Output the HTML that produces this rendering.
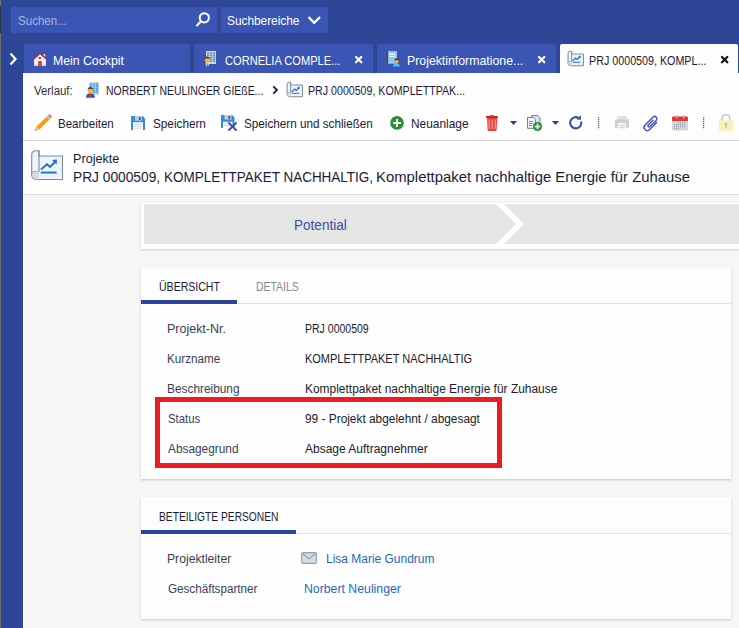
<!DOCTYPE html>
<html><head><meta charset="utf-8">
<style>
html,body{margin:0;padding:0;}
body{width:739px;height:628px;overflow:hidden;position:relative;background:#2d4796;font-family:"Liberation Sans",sans-serif;}
.a{position:absolute;}
.t{position:absolute;white-space:nowrap;transform-origin:0 0;font-family:"Liberation Sans",sans-serif;}
svg{position:absolute;overflow:visible;}
</style></head><body>
<!-- left strip -->
<div class="a" style="left:0;top:0;width:1px;height:628px;background:#6f6f6f"></div>
<div class="a" style="left:0;top:6px;width:1px;height:27px;background:#27354f"></div>
<!-- search box -->
<div class="a" style="left:11px;top:7px;width:206px;height:26px;background:#3a55b4"></div>
<svg style="left:0;top:0" width="739" height="40">
  <circle cx="204.3" cy="17.8" r="4.6" fill="none" stroke="#fff" stroke-width="2"/>
  <line x1="201" y1="21.2" x2="197" y2="25.4" stroke="#fff" stroke-width="2.2" stroke-linecap="round"/>
</svg>
<div class="a" style="left:221px;top:7px;width:107px;height:26px;background:#3a55b4"></div>
<svg style="left:0;top:0" width="739" height="40">
  <polyline points="308.5,17 314.2,22.8 320,17" fill="none" stroke="#fff" stroke-width="2.3"/>
</svg>
<!-- left chevron -->
<svg style="left:0;top:0" width="30" height="80">
  <polyline points="10.5,53.5 15.5,59 10.5,64.5" fill="none" stroke="#fff" stroke-width="2.2"/>
</svg>
<!-- tabs -->
<div class="a" style="left:24px;top:44px;width:166px;height:29px;border-radius:2px 2px 0 0;background:#3a55b4"></div>
<div class="a" style="left:194px;top:44px;width:179px;height:29px;border-radius:2px 2px 0 0;background:#3a55b4"></div>
<div class="a" style="left:377px;top:44px;width:179px;height:29px;border-radius:2px 2px 0 0;background:#3a55b4"></div>
<div class="a" style="left:560px;top:44px;width:178px;height:29px;border-radius:2px 2px 0 0;background:#fdfdfd"></div>
<!-- white area -->
<div class="a" style="left:23px;top:73px;width:716px;height:555px;background:#fdfdfd"></div>
<div class="a" style="left:24px;top:195px;width:715px;height:433px;background:#f6f6f6"></div>
<div class="a" style="left:23px;top:140px;width:716px;height:1px;background:#d6d6d6"></div>
<div class="a" style="left:23px;top:194px;width:716px;height:1px;background:#dcdcdc"></div>
<!-- pipeline -->
<div class="a" style="left:141px;top:203px;width:600px;height:46px;background:#fff;box-shadow:0 1px 2px rgba(0,0,0,0.18)"></div>
<div class="a" style="left:144px;top:204px;width:600px;height:40px;background:#e5e5e5"></div>
<svg style="left:0;top:0" width="739" height="260">
  <polygon points="496,204 504,204 524,224 504,244 496,244 516,224" fill="#fff"/>
</svg>
<!-- card 1 -->
<div class="a" style="left:141px;top:267px;width:590px;height:212px;background:#fdfdfd;box-shadow:0 1px 2px rgba(0,0,0,0.2)"></div>
<div class="a" style="left:141px;top:303px;width:590px;height:1px;background:#e2e2e2"></div>
<div class="a" style="left:141px;top:300px;width:96px;height:4px;background:#2c4596"></div>
<div class="a" style="left:155px;top:397px;width:337px;height:61px;border:5px solid #ec1c24"></div>
<!-- card 2 -->
<div class="a" style="left:141px;top:497px;width:590px;height:122px;background:#fdfdfd;box-shadow:0 1px 2px rgba(0,0,0,0.2)"></div>
<div class="a" style="left:141px;top:533px;width:590px;height:1px;background:#e2e2e2"></div>
<div class="a" style="left:141px;top:530px;width:155px;height:4px;background:#2c4596"></div>

<svg style="left:0;top:0" width="739" height="628">
 <defs>
  <g id="chart">
   <!-- 32x30 local -->
   <path d="M8,6 H31.5 V29.5 H6 Q0.7,29.5 0.7,24.5 V5 Q0.7,0.7 4.5,0.7 H8 Z" fill="#eef3f9" stroke="#7b8d99" stroke-width="1.1"/>
   <path d="M8,0.7 V21.5 H5 Q0.7,21.5 0.7,25.5" fill="none" stroke="#7b8d99" stroke-width="1.1"/>
   <path d="M0.9,24.5 Q1.5,21.6 5,21.6 H8 V29.2 H5.5 Q1,29 0.9,24.5Z" fill="#d3dbe3"/>
   <polyline points="10,19.5 16,14.3 19,17 24.5,11.5" fill="none" stroke="#1f6fd1" stroke-width="1.9"/>
   <polygon points="21,10 26,9.5 25.5,14.5" fill="#1f6fd1"/>
   <rect x="9.8" y="21.6" width="15.8" height="1.9" fill="#1f6fd1"/>
  </g>
  <g id="chartS">
   <!-- 32x30 local -->
   <path d="M8,6 H31.5 V29.5 H6 Q0.7,29.5 0.7,24.5 V5 Q0.7,0.7 4.5,0.7 H8 Z" fill="#eef3f9" stroke="#7b8d99" stroke-width="2"/>
   <path d="M8,0.7 V21.5 H5 Q0.7,21.5 0.7,25.5" fill="none" stroke="#7b8d99" stroke-width="2"/>
   <path d="M0.9,24.5 Q1.5,21.6 5,21.6 H8 V29.2 H5.5 Q1,29 0.9,24.5Z" fill="#d3dbe3"/>
   <polyline points="10,19.5 16,14.3 19,17 24.5,11.5" fill="none" stroke="#1f6fd1" stroke-width="2.4"/>
   <polygon points="21,10 26,9.5 25.5,14.5" fill="#1f6fd1"/>
   <rect x="9.8" y="21.6" width="15.8" height="1.9" fill="#1f6fd1"/>
  </g>
  <g id="bldg">
   <!-- 14x16 local: building + person -->
   <rect x="3" y="0" width="10" height="13" fill="#d8d5cc"/>
   <g fill="#1e8ff5">
    <rect x="4" y="1.6" width="2.2" height="1.2"/><rect x="7" y="1.6" width="2.2" height="1.2"/><rect x="10" y="1.6" width="2.2" height="1.2"/>
    <rect x="4" y="3.6" width="2.2" height="1.2"/><rect x="7" y="3.6" width="2.2" height="1.2"/><rect x="10" y="3.6" width="2.2" height="1.2"/>
    <rect x="7" y="5.6" width="2.2" height="1.2"/><rect x="10" y="5.6" width="2.2" height="1.2"/>
    <rect x="7" y="7.6" width="2.2" height="1.2"/><rect x="10" y="7.6" width="2.2" height="1.2"/>
    <rect x="7" y="9.6" width="2.2" height="1.2"/><rect x="10" y="9.6" width="2.2" height="1.2"/>
   </g>
  </g>
 </defs>
 <!-- house -->
 <rect x="34" y="58" width="12" height="8" fill="#eceef8"/>
 <rect x="34" y="64.5" width="12" height="1.5" fill="#c9cde8"/>
 <rect x="43.5" y="54" width="1.6" height="3.5" fill="#eceef8"/>
 <polygon points="40,52 33.3,58.6 34.5,59.6 40,54.3 45.5,59.6 46.7,58.6" fill="#c0262c"/>
 <polygon points="40,54.3 34.5,59.6 45.5,59.6" fill="#eceef8"/>
 <rect x="38.9" y="57.2" width="2" height="1.8" fill="#0b4a8c"/>
 <rect x="38.1" y="61" width="3.8" height="5" fill="#e64a0c"/>
 <!-- tab2 icon building+person -->
 <use href="#bldg" x="203" y="51"/>
 <circle cx="207.3" cy="60" r="2.6" fill="#f5b53a"/>
 <path d="M204.6,59.5 Q204.8,56.6 207.3,56.6 Q209.9,56.6 210,59.2 Q208.6,58 207.3,58.4 Q205.6,58 204.6,59.5Z" fill="#3b3b3b"/>
 <path d="M205.5,63.2 L209.2,63.2 L208.2,66.2 L206.4,66.2Z" fill="#e8e8f4"/>
 <rect x="206.8" y="63.5" width="1" height="2.6" fill="#e53935"/>
 <!-- tab3 icon book+person -->
 <rect x="388" y="51" width="9" height="12.8" fill="#92c6f2"/>
 <rect x="386.3" y="51.3" width="1.8" height="12.2" fill="#3d515e"/>
 <rect x="389.3" y="53.3" width="6" height="1.6" fill="#eaf6ff"/>
 <rect x="389.3" y="56" width="6" height="0.9" fill="#eaf6ff"/>
 <path d="M393,66.6 Q393,63.8 396.5,63.8 Q400,63.8 400,66.6Z" fill="#4fc3f7"/>
 <circle cx="396.6" cy="61.3" r="2.2" fill="#f7a534"/>
 <path d="M394.3,61 Q394.3,58.3 396.6,58.3 Q398.9,58.3 398.9,61 Q397.8,59.8 396.6,60 Q395.3,59.8 394.3,61Z" fill="#3b3b3b"/>
 <!-- tab4 chart icon -->
 <use href="#chartS" transform="translate(567.7,51) scale(0.5)"/>
 <!-- breadcrumb icons -->
 <use href="#bldg" x="86" y="82"/>
 <circle cx="90.3" cy="90.5" r="2.6" fill="#f5b53a"/>
 <path d="M87.6,90 Q87.8,87 90.3,87 Q92.9,87 93,89.7 Q91.6,88.5 90.3,88.9 Q88.6,88.5 87.6,90Z" fill="#3b3b3b"/>
 <path d="M86,97.8 Q86,94 88.7,93.6 L92,93.6 Q94.9,94 94.9,97.8Z" fill="#3a4fbf"/>
 <rect x="89.9" y="94" width="1" height="3" fill="#e53935"/>
 <polyline points="273.3,86.3 277,90 273.3,93.7" fill="none" stroke="#1b1b3a" stroke-width="1.8"/>
 <use href="#chartS" transform="translate(286.7,82) scale(0.5)"/>
 <!-- header chart icon -->
 <use href="#chart" x="31" y="150"/>
 <!-- tab close x -->
 <g stroke="#fff" stroke-width="2.2" stroke-linecap="round">
  <line x1="356" y1="57" x2="361.3" y2="62.3"/><line x1="361.3" y1="57" x2="356" y2="62.3"/>
  <line x1="539" y1="57" x2="544.3" y2="62.3"/><line x1="544.3" y1="57" x2="539" y2="62.3"/>
 </g>
 <g stroke="#111" stroke-width="2.2" stroke-linecap="round">
  <line x1="722" y1="57" x2="727.3" y2="62.3"/><line x1="727.3" y1="57" x2="722" y2="62.3"/>
 </g>
 <!-- pencil -->
 <g transform="translate(35.2,130.5) rotate(-44)">
  <polygon points="0,0 3.2,-2 3.2,2" fill="#f7c54a"/>
  <polygon points="0,0 1.3,-0.8 1.3,0.8" fill="#333"/>
  <rect x="3.2" y="-2" width="15" height="4" fill="#ff9a0a"/>
  <rect x="18.2" y="-2" width="1.6" height="4" fill="#b0c4cf"/>
  <path d="M19.8,-2 H20.6 Q22,-2 22,0 Q22,2 20.6,2 H19.8Z" fill="#e57373"/>
 </g>
 <!-- floppy -->
 <path d="M131,116 H142.5 L145,118.5 V130 H131Z" fill="#2f8ede"/>
 <rect x="135" y="116" width="7" height="4.7" fill="#c5ccd2"/>
 <rect x="139" y="117" width="1.6" height="3" fill="#16508a"/>
 <rect x="133" y="122.2" width="10" height="7.8" fill="#ffffff"/>
 <rect x="134.3" y="123.7" width="7.4" height="0.9" fill="#c5ccd2"/>
 <rect x="134.3" y="125.7" width="7.4" height="0.9" fill="#c5ccd2"/>
 <rect x="134.3" y="127.7" width="7.4" height="0.9" fill="#c5ccd2"/>
 <!-- floppy close -->
 <path d="M221,115 H232 L234.5,117.5 V128 H221Z" fill="#2f8ede"/>
 <rect x="224.5" y="115" width="7" height="4.5" fill="#c5ccd2"/>
 <rect x="228.5" y="116" width="1.6" height="2.8" fill="#16508a"/>
 <rect x="223" y="121.8" width="9.5" height="6.2" fill="#ffffff"/>
 <rect x="224.2" y="123.2" width="6" height="0.9" fill="#c5ccd2"/>
 <rect x="224.2" y="125.2" width="6" height="0.9" fill="#c5ccd2"/>
 <g stroke="#3f4fb8" stroke-width="1.9" stroke-linecap="round">
  <line x1="229" y1="123" x2="236" y2="130"/><line x1="236" y1="123" x2="229" y2="130"/>
 </g>
 <!-- plus circle -->
 <circle cx="397" cy="122.9" r="6.8" fill="#2e8b3a"/>
 <rect x="393" y="122" width="8" height="1.9" fill="#fff"/>
 <rect x="396.1" y="119" width="1.9" height="8" fill="#fff"/>
 <!-- trash -->
 <rect x="485.9" y="116" width="12.1" height="2" rx="0.8" fill="#c62828"/>
 <rect x="490" y="115.2" width="3.8" height="1.2" fill="#d32f2f"/>
 <path d="M487,118 H497.2 L496.6,130 Q496.5,131 495.5,131 H488.7 Q487.7,131 487.6,130Z" fill="#e8453c"/>
 <g fill="#f6b3b0"><rect x="488.7" y="119.5" width="0.9" height="9.5"/><rect x="491.7" y="119.5" width="0.9" height="9.5"/><rect x="494.7" y="119.5" width="0.9" height="9.5"/></g>
 <!-- dropdown triangles -->
 <polygon points="509.9,121 517.1,121 513.5,124.9" fill="#2c3e9a"/>
 <polygon points="551.9,121 559.1,121 555.5,124.9" fill="#2c3e9a"/>
 <!-- copy icon -->
 <path d="M531.5,115.6 H538 L540,117.6 V125 H531.5Z" fill="#dfe4ea" stroke="#6f8390" stroke-width="1"/>
 <path d="M527.5,117.5 H533.5 L535.5,119.5 V128.3 H527.5Z" fill="#f2f5f8" stroke="#6f8390" stroke-width="1"/>
 <g fill="#6f8390"><rect x="529" y="121" width="4" height="0.9"/><rect x="529" y="123" width="4" height="0.9"/><rect x="529" y="125" width="3" height="0.9"/></g>
 <circle cx="537.5" cy="126.5" r="4.6" fill="#2e8b3a"/>
 <rect x="534.7" y="125.8" width="5.6" height="1.5" fill="#fff"/>
 <rect x="536.8" y="123.7" width="1.5" height="5.6" fill="#fff"/>
 <!-- refresh -->
 <path d="M581.2,121.5 A5.6,5.6 0 1 1 578.5,117.9" fill="none" stroke="#3949b0" stroke-width="2.1"/>
 <polygon points="580.9,115.3 581,119.8 576.5,119.6" fill="#3949b0"/>
 <!-- dotted seps -->
 <g fill="#3a4aa8">
  <rect x="598" y="117" width="1.3" height="1.3" rx="0.6"/>
  <rect x="598" y="119" width="1.3" height="1.3" rx="0.6"/>
  <rect x="598" y="121" width="1.3" height="1.3" rx="0.6"/>
  <rect x="598" y="123" width="1.3" height="1.3" rx="0.6"/>
  <rect x="598" y="125" width="1.3" height="1.3" rx="0.6"/>
  <rect x="598" y="127" width="1.3" height="1.3" rx="0.6"/>
  <rect x="703" y="117" width="1.3" height="1.3" rx="0.6"/>
  <rect x="703" y="119" width="1.3" height="1.3" rx="0.6"/>
  <rect x="703" y="121" width="1.3" height="1.3" rx="0.6"/>
  <rect x="703" y="123" width="1.3" height="1.3" rx="0.6"/>
  <rect x="703" y="125" width="1.3" height="1.3" rx="0.6"/>
  <rect x="703" y="127" width="1.3" height="1.3" rx="0.6"/>
 </g>
<!-- printer -->
 <rect x="617.2" y="116" width="9.6" height="3.5" fill="#dedede"/>
 <rect x="615" y="119.3" width="14" height="8.5" rx="1" fill="#cfcfcf"/>
 <rect x="618" y="123" width="8" height="6.8" fill="#f3f3f3"/>
 <rect x="619.2" y="125" width="5.6" height="0.8" fill="#cfcfcf"/><rect x="619.2" y="127" width="5.6" height="0.8" fill="#cfcfcf"/>
 <!-- paperclip -->
 <g transform="translate(651.1,122.8) rotate(-45)">
  <path d="M-3.5,1.9 H5.3 A2.3,2.3 0 0 0 5.3,-2.7 H-5.8 A3.2,3.2 0 0 0 -5.8,3.7 H4.5" fill="none" stroke="#3f51b5" stroke-width="1.4"/>
  <path d="M-3.5,1.9 A1.2,1.2 0 0 1 -3.5,-0.5 H3.6" fill="none" stroke="#3f51b5" stroke-width="1.4"/>
 </g>
<!-- calendar -->
 <rect x="672" y="116.5" width="16" height="14" rx="1.2" fill="#cfd6dc"/>
 <path d="M672,121 V117.7 Q672,116.5 673.2,116.5 H686.8 Q688,116.5 688,117.7 V121Z" fill="#e53935"/>
 <rect x="676" y="115" width="1.3" height="3.6" rx="0.6" fill="#b0bec5"/><rect x="683" y="115" width="1.3" height="3.6" rx="0.6" fill="#b0bec5"/>
 <g fill="#8a989f">
  <rect x="678" y="122.2" width="1" height="1"/><rect x="680" y="122.2" width="1" height="1"/><rect x="682" y="122.2" width="1" height="1"/><rect x="684" y="122.2" width="1" height="1"/>
  <rect x="674" y="124.2" width="1" height="1"/><rect x="676" y="124.2" width="1" height="1"/><rect x="678" y="124.2" width="1" height="1"/><rect x="680" y="124.2" width="1" height="1"/><rect x="682" y="124.2" width="1" height="1"/><rect x="684" y="124.2" width="1" height="1"/>
  <rect x="674" y="126.2" width="1" height="1"/><rect x="676" y="126.2" width="1" height="1"/><rect x="678" y="126.2" width="1" height="1"/><rect x="680" y="126.2" width="1" height="1"/><rect x="682" y="126.2" width="1" height="1"/><rect x="684" y="126.2" width="1" height="1"/>
  <rect x="674" y="128.2" width="1" height="1"/><rect x="676" y="128.2" width="1" height="1"/><rect x="678" y="128.2" width="1" height="1"/>
 </g>
 <!-- lock -->
 <path d="M722,121 V118.5 A3.9,3.9 0 0 1 729.8,118.5 V121" fill="none" stroke="#c5ccd0" stroke-width="1.8"/>
 <rect x="719" y="120.3" width="14" height="10.4" rx="1.2" fill="#fcefb4"/>
 <circle cx="726" cy="124" r="1.4" fill="#b7bfc3"/><rect x="725.3" y="124" width="1.4" height="4" fill="#b7bfc3"/>
 <!-- mail -->
 <rect x="301.7" y="552.6" width="14.8" height="10.8" rx="1.6" fill="#d5dde3" stroke="#8fa3b0" stroke-width="1.2"/>
 <polyline points="302.6,553.5 309.1,558.8 315.6,553.5" fill="none" stroke="#8fa3b0" stroke-width="1.2"/>
</svg>


<div class="t" style="left:18.31px;top:14px;font-size:13px;line-height:13px;color:#a9b5e2;transform:scaleX(0.8887)">Suchen...</div>
<div class="t" style="left:227.09px;top:14px;font-size:13px;line-height:13px;color:#ffffff;transform:scaleX(0.9103)">Suchbereiche</div>
<div class="t" style="left:53.46px;top:54px;font-size:13px;line-height:13px;color:#ffffff;transform:scaleX(0.9432)">Mein Cockpit</div>
<div class="t" style="left:224.50px;top:54px;font-size:13px;line-height:13px;color:#ffffff;transform:scaleX(0.8545)">CORNELIA COMPLE...</div>
<div class="t" style="left:406.55px;top:54px;font-size:13px;line-height:13px;color:#ffffff;transform:scaleX(0.9463)">Projektinformatione...</div>
<div class="t" style="left:589.48px;top:54px;font-size:13px;line-height:13px;color:#1b1b3a;transform:scaleX(0.8248)">PRJ 0000509, KOMPL...</div>
<div class="t" style="left:34.00px;top:85px;font-size:12px;line-height:12px;color:#30303a;transform:scaleX(0.9500)">Verlauf:</div>
<div class="t" style="left:105.53px;top:85px;font-size:12px;line-height:12px;color:#1b1b3a;transform:scaleX(0.8693)">NORBERT NEULINGER GIEßE...</div>
<div class="t" style="left:307.51px;top:85px;font-size:12px;line-height:12px;color:#1b1b3a;transform:scaleX(0.8863)">PRJ 0000509, KOMPLETTPAK...</div>
<div class="t" style="left:58.41px;top:117px;font-size:13px;line-height:13px;color:#1b1b3a;transform:scaleX(0.8871)">Bearbeiten</div>
<div class="t" style="left:152.50px;top:117px;font-size:13px;line-height:13px;color:#1b1b3a;transform:scaleX(0.9035)">Speichern</div>
<div class="t" style="left:243.80px;top:117px;font-size:13px;line-height:13px;color:#1b1b3a;transform:scaleX(0.9007)">Speichern und schließen</div>
<div class="t" style="left:411.09px;top:117px;font-size:13px;line-height:13px;color:#1b1b3a;transform:scaleX(0.9145)">Neuanlage</div>
<div class="t" style="left:72.53px;top:152px;font-size:13px;line-height:13px;color:#1b1b3a;transform:scaleX(0.9723)">Projekte</div>
<div class="t" style="left:72.58px;top:169px;font-size:15px;line-height:15px;color:#1b1b3a;transform:scaleX(0.9161)">PRJ 0000509,</div>
<div class="t" style="left:163.90px;top:169px;font-size:15px;line-height:15px;color:#1b1b3a;transform:scaleX(0.8991)">KOMPLETTPAKET NACHHALTIG,</div>
<div class="t" style="left:375.81px;top:169px;font-size:15px;line-height:15px;color:#1b1b3a;transform:scaleX(0.9911)">Komplettpaket nachhaltige Energie für Zuhause</div>
<div class="t" style="left:293.93px;top:218px;font-size:14px;line-height:14px;color:#3b4ea6;transform:scaleX(0.9679)">Potential</div>
<div class="t" style="left:158.69px;top:280px;font-size:13px;line-height:13px;color:#1b1b3a;transform:scaleX(0.8108)">ÜBERSICHT</div>
<div class="t" style="left:256.40px;top:280px;font-size:13px;line-height:13px;color:#8a8a8a;transform:scaleX(0.8019)">DETAILS</div>
<div class="t" style="left:167.36px;top:323px;font-size:12px;line-height:12px;color:#3a4055;transform:scaleX(1.0400)">Projekt-Nr.</div>
<div class="t" style="left:167.43px;top:353px;font-size:12px;line-height:12px;color:#3a4055;transform:scaleX(0.9722)">Kurzname</div>
<div class="t" style="left:167.41px;top:383px;font-size:12px;line-height:12px;color:#3a4055;transform:scaleX(0.9889)">Beschreibung</div>
<div class="t" style="left:168.26px;top:413px;font-size:12px;line-height:12px;color:#3a4055;transform:scaleX(0.9445)">Status</div>
<div class="t" style="left:168.40px;top:443px;font-size:12px;line-height:12px;color:#3a4055;transform:scaleX(0.9873)">Absagegrund</div>
<div class="t" style="left:304.72px;top:323px;font-size:12px;line-height:12px;color:#1b1b2a;transform:scaleX(0.8761)">PRJ 0000509</div>
<div class="t" style="left:304.69px;top:353px;font-size:12px;line-height:12px;color:#1b1b2a;transform:scaleX(0.9149)">KOMPLETTPAKET NACHHALTIG</div>
<div class="t" style="left:304.60px;top:383px;font-size:12px;line-height:12px;color:#1b1b2a;transform:scaleX(0.9956)">Komplettpaket nachhaltige Energie für Zuhause</div>
<div class="t" style="left:305.30px;top:413px;font-size:12px;line-height:12px;color:#1b1b2a;transform:scaleX(0.9893)">99 - Projekt abgelehnt / abgesagt</div>
<div class="t" style="left:305.30px;top:443px;font-size:12px;line-height:12px;color:#1b1b2a;transform:scaleX(0.9992)">Absage Auftragnehmer</div>
<div class="t" style="left:158.71px;top:510px;font-size:13px;line-height:13px;color:#1b1b3a;transform:scaleX(0.7873)">BETEILIGTE PERSONEN</div>
<div class="t" style="left:167.09px;top:553px;font-size:12px;line-height:12px;color:#3a4055;transform:scaleX(1.0145)">Projektleiter</div>
<div class="t" style="left:168.10px;top:583px;font-size:12px;line-height:12px;color:#3a4055;transform:scaleX(0.9707)">Geschäftspartner</div>
<div class="t" style="left:326.30px;top:553px;font-size:12px;line-height:12px;color:#1c6bbf;transform:scaleX(0.9972)">Lisa Marie Gundrum</div>
<div class="t" style="left:304.38px;top:583px;font-size:12px;line-height:12px;color:#1c6bbf;transform:scaleX(1.0234)">Norbert Neulinger</div>
</body></html>
